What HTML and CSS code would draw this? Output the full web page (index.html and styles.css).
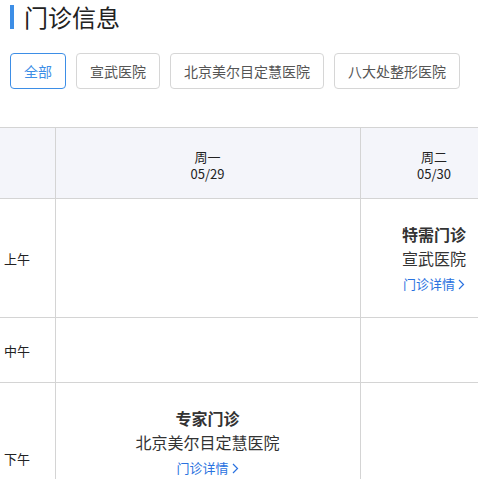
FILE: index.html
```html
<!DOCTYPE html>
<html lang="zh">
<head>
<meta charset="utf-8">
<link rel="stylesheet" href="styles.css">
</head>
<body>
<div class="page">
  <h1 class="title">门诊信息</h1>
  <div class="filters">
    <button class="filter active">全部</button>
    <button class="filter">宣武医院</button>
    <button class="filter">北京美尔目定慧医院</button>
    <button class="filter">八大处整形医院</button>
  </div>
  <div class="table-wrap">
    <table class="schedule">
      <colgroup>
        <col class="c-label"><col class="c-wide"><col class="c-day">
      </colgroup>
      <thead>
        <tr class="head-row">
          <th></th>
          <th><div>周一</div><div>05/29</div></th>
          <th><div>周二</div><div>05/30</div></th>
        </tr>
      </thead>
      <tbody>
        <tr class="row-am">
          <td class="label">上午</td>
          <td></td>
          <td class="slot">
            <div class="slot-type">特需门诊</div>
            <div class="slot-hosp">宣武医院</div>
            <a class="slot-link">门诊详情<svg class="chev" width="7" height="11" viewBox="0 0 7 11"><path d="M1 1l4.5 4.5L1 10" fill="none" stroke="currentColor" stroke-width="1.2"/></svg></a>
          </td>
        </tr>
        <tr class="row-noon">
          <td class="label">中午</td>
          <td></td><td></td>
        </tr>
        <tr class="row-pm">
          <td class="label">下午</td>
          <td class="slot">
            <div class="slot-type">专家门诊</div>
            <div class="slot-hosp">北京美尔目定慧医院</div>
            <a class="slot-link">门诊详情<svg class="chev" width="7" height="11" viewBox="0 0 7 11"><path d="M1 1l4.5 4.5L1 10" fill="none" stroke="currentColor" stroke-width="1.2"/></svg></a>
          </td>
          <td></td>
        </tr>
      </tbody>
    </table>
  </div>
</div>
</body>
</html>
```
FILE: styles.css
```css
* { box-sizing: border-box; }
html, body { margin: 0; padding: 0; background: #fff; overflow: hidden; }
body {
  font-family: "Noto Sans CJK SC", "Noto Sans", sans-serif;
  color: #333;
}
.page { width: 478px; }
.title {
  margin: 5px 0 0 10px;
  padding-left: 10px;
  border-left: 4px solid #3d8ee6;
  font-size: 24px;
  font-weight: normal;
  line-height: 24px;
  color: #222;
}
.filters {
  display: flex;
  gap: 10px;
  margin: 24px 0 0 10px;
  white-space: nowrap;
}
.filter {
  flex: none;
  height: 36px;
  padding: 0 13px;
  font-family: inherit;
  font-size: 14px;
  color: #555;
  background: #fff;
  border: 1px solid #d6d6d6;
  border-radius: 4px;
}
.filter.active {
  color: #3d8ee6;
  border-color: #3d8ee6;
}
.table-wrap { margin-top: 38px; width: 478px; overflow: hidden; }
.schedule {
  border-collapse: collapse;
  table-layout: fixed;
  width: 508px;
}
.c-label { width: 55px; }
.c-wide { width: 305px; }
.c-day { width: 148px; }
.schedule th, .schedule td {
  border: 1px solid #d4d4d4;
  padding: 0;
  text-align: center;
}
.schedule tr > :first-child { border-left: none; }
.head-row th {
  height: 71px;
  background: #f4f5fa;
  font-weight: normal;
  font-size: 13px;
  line-height: 17px;
  color: #222;
  padding-top: 4px;
}
.label {
  text-align: left !important;
  padding-left: 4px !important;
  font-size: 13px;
  color: #222;
}
.row-am td { height: 119px; }
.row-noon td { height: 65px; }
.row-pm td { height: 152px; }
.slot { vertical-align: top; padding-top: 23px !important; }
.slot-type { font-size: 16px; font-weight: bold; line-height: 24px; color: #333; }
.slot-hosp { font-size: 16px; line-height: 24px; color: #333; }
.slot-link {
  display: inline-flex;
  align-items: center;
  gap: 3px;
  font-size: 13px;
  line-height: 24px;
  color: #2a72e0;
}
.chev { display: block; }
```
